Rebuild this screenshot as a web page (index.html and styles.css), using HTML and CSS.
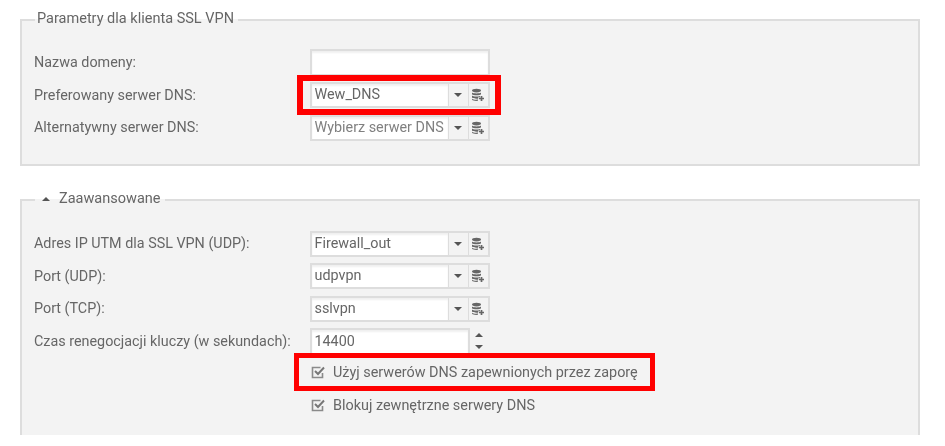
FILE: index.html
```html
<!DOCTYPE html>
<html lang="pl">
<head>
  <meta charset="UTF-8" />
  <title>Parametry dla klienta SSL VPN</title>
  <link rel="stylesheet" href="styles.css">
</head>
<body>
  <svg class="defs" width="0" height="0">
    <symbol id="db-add" viewBox="0 0 14 14">
      <ellipse cx="5.5" cy="2.6" rx="4.5" ry="1.8" fill="#666"/>
      <path d="M1 4.6c1 1.2 8 1.2 9 0v1.7c-1 1.3-8 1.3-9 0zM1 7.6c1 1.2 6 1.3 8 .4v1.2H7.2v1.5c-2.4.3-5.400-.1-6.200-1.100z" fill="#666"/>
      <path d="M1 10.700c1 1 4 1.200 6 .9v1.200c-2.500.3-5.200-.1-6-1z" fill="#666"/>
      <path d="M10.500 8v5M8 10.500h5" stroke="#666" stroke-width="1.700" fill="none"/>
    </symbol>
    <symbol id="check" viewBox="0 0 14 14">
      <path d="M11.500 8v4.500h-10v-10h8" stroke="#8a8a8a" stroke-width="1.600" fill="none"/>
      <path d="M4 6l3 3 6-6.500" stroke="#777" stroke-width="2" fill="none"/>
    </symbol>
  </svg>

  <main class="page">
    <fieldset class="panel panel-client">
      <legend>Parametry dla klienta SSL VPN</legend>
      <div class="row">
        <label>Nazwa domeny:</label>
        <input class="text-input" type="text" />
      </div>
      <div class="row">
        <label>Preferowany serwer DNS:</label>
        <div class="combo">
          <span class="combo-value">Wew_DNS</span>
          <span class="combo-btn"><i class="caret"></i></span>
          <span class="combo-btn"><svg class="db"><use href="#db-add"/></svg></span>
        </div>
        <span class="highlight highlight-dns"></span>
      </div>
      <div class="row">
        <label>Alternatywny serwer DNS:</label>
        <div class="combo">
          <span class="combo-value placeholder">Wybierz serwer DNS</span>
          <span class="combo-btn"><i class="caret"></i></span>
          <span class="combo-btn"><svg class="db"><use href="#db-add"/></svg></span>
        </div>
      </div>
    </fieldset>

    <fieldset class="panel panel-advanced">
      <legend><i class="caret caret-up"></i>Zaawansowane</legend>
      <div class="row">
        <label>Adres IP UTM dla SSL VPN (UDP):</label>
        <div class="combo">
          <span class="combo-value">Firewall_out</span>
          <span class="combo-btn"><i class="caret"></i></span>
          <span class="combo-btn"><svg class="db"><use href="#db-add"/></svg></span>
        </div>
      </div>
      <div class="row">
        <label>Port (UDP):</label>
        <div class="combo">
          <span class="combo-value">udpvpn</span>
          <span class="combo-btn"><i class="caret"></i></span>
          <span class="combo-btn"><svg class="db"><use href="#db-add"/></svg></span>
        </div>
      </div>
      <div class="row">
        <label>Port (TCP):</label>
        <div class="combo">
          <span class="combo-value">sslvpn</span>
          <span class="combo-btn"><i class="caret"></i></span>
          <span class="combo-btn"><svg class="db"><use href="#db-add"/></svg></span>
        </div>
      </div>
      <div class="row">
        <label>Czas renegocjacji kluczy (w sekundach):</label>
        <input class="text-input number-input" type="text" value="14400" />
        <span class="spinner"><i class="caret caret-up"></i><i class="caret"></i></span>
      </div>
      <div class="check-row check-first">
        <svg class="check"><use href="#check"/></svg>
        <span>Użyj serwerów DNS zapewnionych przez zaporę</span>
        <span class="highlight highlight-check"></span>
      </div>
      <div class="check-row">
        <svg class="check"><use href="#check"/></svg>
        <span>Blokuj zewnętrzne serwery DNS</span>
      </div>
    </fieldset>
  </main>
</body>
</html>
```

FILE: styles.css
```css
* { box-sizing: border-box; }
html, body { margin: 0; height: 446px; overflow: hidden; background: #fff; }
body { font-family: Roboto, sans-serif; font-size: 14.350px; color: #666; }
.defs { position: absolute; }
.page { width: 900px; margin-left: 20px; padding-top: 12px; filter: blur(0.45px); }

.panel { margin: 0; padding: 21.500px 12px 0 12px; min-width: 0; border: 2px solid #ddd; background: #f3f3f3; }
.panel legend { margin-left: 1px; padding: 0 4px 2px 2px; line-height: 14px; font-size: 14.500px; }
.panel-client { height: 154px; }
.panel-advanced { height: 243px; margin-top: 26px; padding-top: 22.500px; border-bottom: none; }

.row { position: relative; display: flex; align-items: center; height: 26px; margin-bottom: 6.500px; }
.row label { width: 275.500px; flex: none; }

.text-input { width: 180px; height: 27px; padding: 0 3px; border: 2px solid #ddd; background: #fff; font: inherit; color: #666; outline: none; box-shadow: inset 0 2px 2px #f0f0f0; }
.number-input { width: 160px; }

.combo { display: flex; width: 180px; height: 26px; border: 2px solid #ddd; background: #f3f3f3; }
.combo-value { flex: 1; min-width: 0; padding: 0 3px; line-height: 22px; background: #fff; white-space: nowrap; overflow: hidden; box-shadow: inset 0 2px 2px #f0f0f0; }
.placeholder { color: #808080; }
.combo-btn { display: flex; align-items: center; justify-content: center; width: 20px; flex: none; border-left: 1px solid #ddd; }

.caret { display: block; width: 0; height: 0; border-left: 4px solid transparent; border-right: 4px solid transparent; border-top: 4px solid #555; }
.caret-up { border-top: none; border-bottom: 4px solid #555; }
.db { width: 14px; height: 14px; }

.spinner { display: flex; flex-direction: column; gap: 8px; margin-left: 5px; }

.check-row { position: relative; display: flex; align-items: center; gap: 8px; height: 20px; margin-left: 275px; margin-bottom: 13px; padding-left: 2px; font-size: 14.400px; }
.check-first { margin-top: 8px; }
.check { width: 14px; height: 14px; flex: none; }

legend .caret { display: inline-block; margin: 0 9px 2px 5px; }

.highlight { position: absolute; border: 6px solid #f00; }
.highlight-dns { left: -12px; top: -7px; width: 204px; height: 40px; margin-left: 275px; }
.highlight-check { left: -15px; top: -9px; width: 361px; height: 38px; border-width: 5px; }
```
